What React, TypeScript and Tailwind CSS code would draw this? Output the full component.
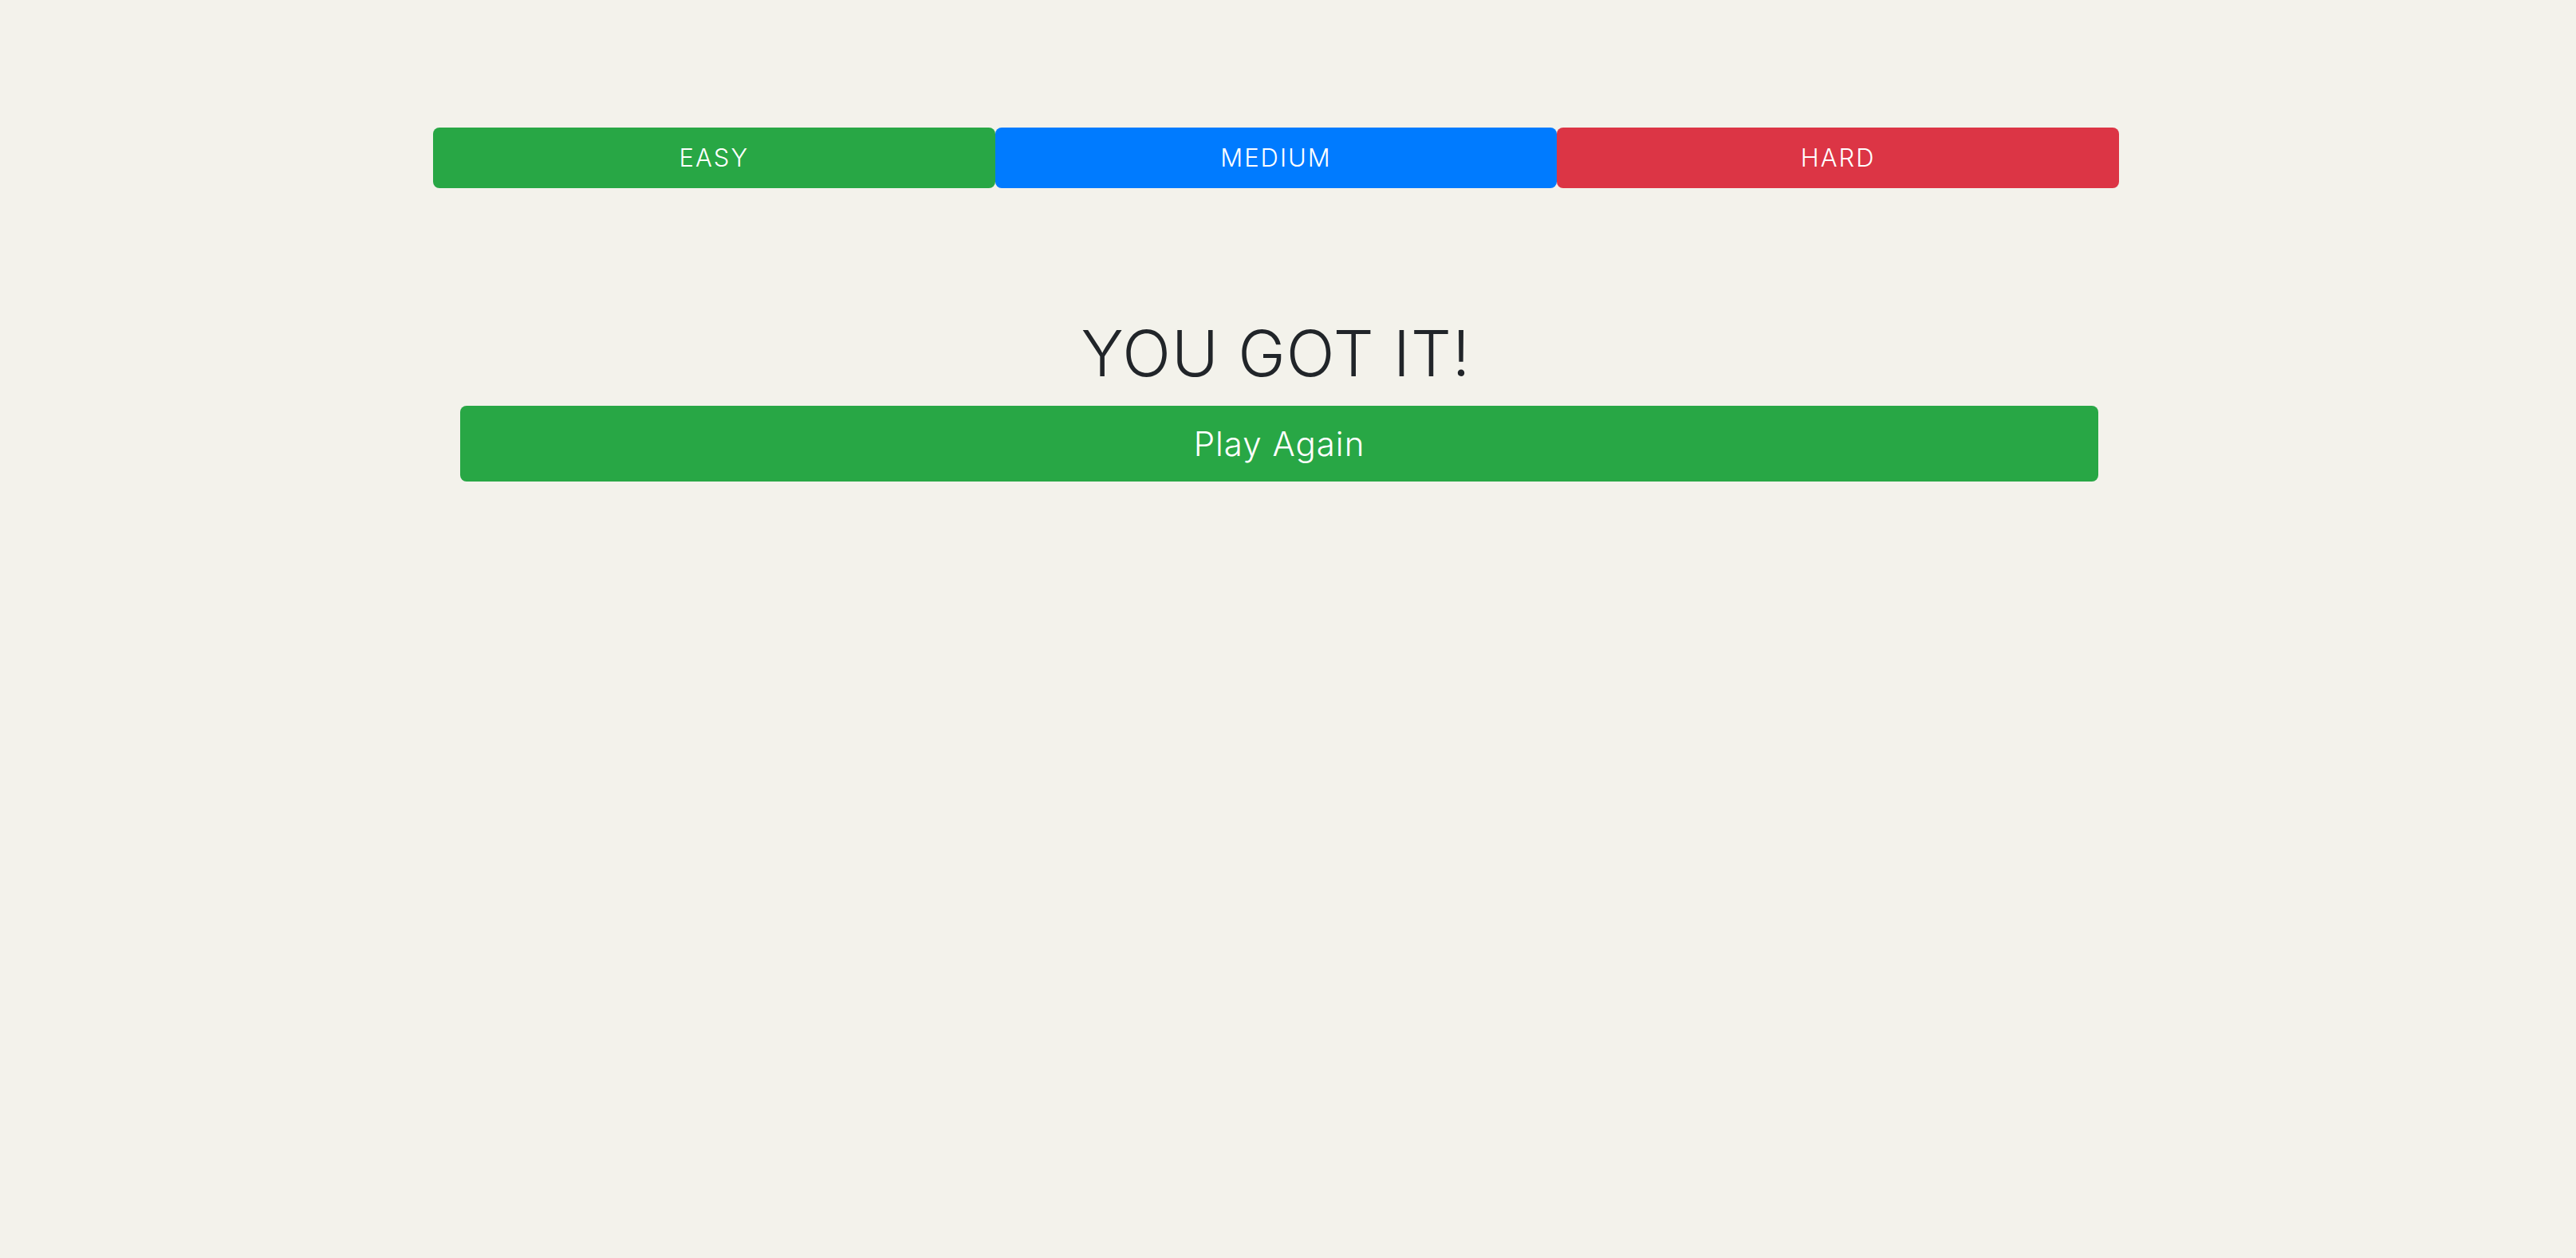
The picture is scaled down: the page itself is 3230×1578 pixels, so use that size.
import React from 'react';

const levels = [
  { label: 'EASY', color: 'bg-[#28a745]' },
  { label: 'MEDIUM', color: 'bg-[#007bff]' },
  { label: 'HARD', color: 'bg-[#dc3545]' },
];

export default function App() {
  return (
    <div
      className="min-h-screen bg-[#f3f2eb] pt-[160px] pl-[543px]"
      style={{ fontFamily: 'Inter, "Open Sans", sans-serif' }}
    >
      <div className="w-[2114px]">
        {/* difficulty selector */}
        <div className="flex h-[76px]">
          {levels.map((l) => (
            <button
              key={l.label}
              className={`flex-1 ${l.color} rounded-[8px] text-white text-[31px] font-light tracking-[2px] flex items-center justify-center`}
            >
              {l.label}
            </button>
          ))}
        </div>

        <h1 className="mt-[167px] text-center text-[80px] leading-none font-light text-[#212529] tracking-[1px]">
          YOU GOT IT!
        </h1>

        <button className="mt-[26px] ml-[34px] w-[2054px] h-[95px] rounded-[8px] bg-[#28a745] text-white text-[42px] font-light tracking-[1px] flex items-center justify-center">
          Play Again
        </button>
      </div>
    </div>
  );
}
